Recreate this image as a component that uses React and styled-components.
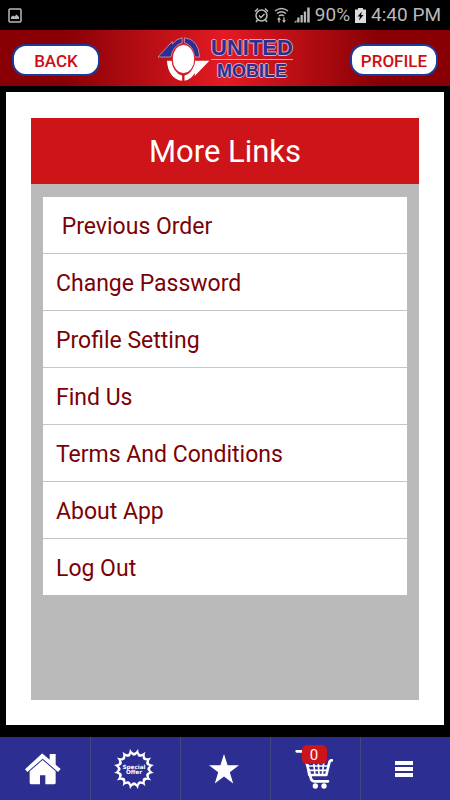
import React from "react";
import styled, { createGlobalStyle } from "styled-components";

const GlobalStyle = createGlobalStyle`
  * {
    box-sizing: border-box;
  }
  body {
    margin: 0;
    background: #000;
    font-family: Roboto, "Liberation Sans", sans-serif;
  }
`;
const Page = styled.div`
  min-height: 100vh;
  display: flex;
  flex-direction: column;
  background: #000;
`;
const StatusBar = styled.div`
  height: 30px;
  padding: 0 9px 0 8px;
  display: flex;
  align-items: center;
  justify-content: space-between;
  color: #b9b9b9;
`;
const StatusRight = styled.div`
  display: flex;
  align-items: center;
  gap: 5px;
  font-size: 19px;
  line-height: 30px;
`;
const StatusIcon = styled.svg`
  display: block;
  fill: none;
  stroke: #b9b9b9;
`;
const Header = styled.header`
  height: 56px;
  padding: 4px 12px 0;
  display: flex;
  align-items: center;
  justify-content: space-between;
  background: linear-gradient(
    to right,
    #880004 0%,
    #880004 14%,
    #e31b23 50%,
    #880004 84%,
    #880004 100%
  );
`;
const HeaderButton = styled.button`
  width: 88px;
  height: 32px;
  padding: 2px 0 0;
  border: 2px solid #1c3a9c;
  border-radius: 14px;
  background: #fff;
  color: #cf0d14;
  font-family: inherit;
  font-size: 17px;
  font-weight: 500;
  line-height: 26px;
  cursor: pointer;
`;
const Logo = styled.div`
  display: flex;
  align-items: center;
  gap: 1px;
  padding-bottom: 2px;
`;
const LogoText = styled.div`
  display: flex;
  flex-direction: column;
  align-items: center;
`;
const LogoWord = styled.span`
  width: 100%;
  text-align: center;
  font-family: "Liberation Sans", sans-serif;
  font-weight: 700;
  font-size: ${(props) => props.$size}px;
  line-height: 22px;
  color: #2b2e92;
  text-shadow: 1px 0 #dfa9b4, -1px 0 #dfa9b4, 0 1px #dfa9b4, 0 -1px #dfa9b4;
`;
const LogoRule = styled.span`
  width: 100%;
  height: 1px;
  background: #f0a3a8;
`;
const Main = styled.main`
  flex: 1;
  margin: 6px 6px 12px;
  padding: 26px 25px 25px;
  display: flex;
  flex-direction: column;
  background: #fff;
`;
const Panel = styled.section`
  flex: 1;
  background: #bababa;
`;
const PanelTitle = styled.h1`
  margin: 0;
  padding: 2px 0 0;
  background: #cd1419;
  color: #fff;
  font-size: 31px;
  font-weight: 400;
  line-height: 64px;
  text-align: center;
`;
const LinkList = styled.ul`
  margin: 13px 12px;
  padding: 0;
  list-style: none;
  background: #fff;
`;
const LinkItem = styled.li`
  & + & {
    border-top: 1px solid #c6c6c6;
  }
`;
const LinkRow = styled.a`
  display: block;
  padding: 4px 13px 0;
  color: #7a0206;
  font-size: 23px;
  line-height: 52px;
  text-decoration: none;
  white-space: pre;
`;
const NavBar = styled.nav`
  height: 63px;
  display: grid;
  grid-template-columns: repeat(5, 1fr);
  background: #2c2e91;
`;
const NavLink = styled.a`
  display: flex;
  align-items: center;
  justify-content: center;
  padding-right: 4px;
  color: #fff;
  text-decoration: none;
  & + & {
    border-left: 1px solid #44467f;
  }
`;
const NavIcon = styled.svg`
  display: block;
  fill: #fff;
`;
const CartHolder = styled.span`
  position: relative;
`;
const CartBadge = styled.span`
  position: absolute;
  top: -4px;
  left: 7px;
  width: 25px;
  height: 19px;
  border-radius: 5px;
  background: #cd1419;
  font-size: 15px;
  line-height: 20px;
  text-align: center;
`;

const links = [
  " Previous Order",
  "Change Password",
  "Profile Setting",
  "Find Us",
  "Terms And Conditions",
  "About App",
  "Log Out",
];

// burst outline: sharp tips joined by curves that dip towards the centre
const burstPath = (tip, dip) => {
  const count = 16;
  const point = (radius, step) => {
    const angle = (step * Math.PI * 2) / count - Math.PI / 2 + Math.PI / count;
    return `${(radius * Math.cos(angle)).toFixed(1)} ${(
      radius * Math.sin(angle)
    ).toFixed(1)}`;
  };
  let d = `M${point(tip, 0)}`;
  for (let i = 0; i < count; i++) {
    d += `Q${point(dip, i + 0.5)} ${point(tip, i + 1)}`;
  }
  return d + "Z";
};

const PictureIcon = () => (
  <StatusIcon width="14" height="15" viewBox="0 0 14 15">
    <rect x="1" y="1" width="12" height="13" rx="1" strokeWidth="1.5" />
    <path d="M3 11V9l2-1.500 1.500 1L8.500 6.500 11 9v2z" fill="#b9b9b9" stroke="none" />
  </StatusIcon>
);

const AlarmIcon = () => (
  <StatusIcon width="15" height="16" viewBox="0 0 15 16" strokeWidth="1.5">
    <circle cx="7.5" cy="8.500" r="5.500" />
    <path d="M1 4.500L4 1.500M14 4.500L11 1.500M3.500 13L2 15M11.500 13L13 15M5 8.500l2 2 3.500-3.500" />
  </StatusIcon>
);

const WifiIcon = () => (
  <StatusIcon width="15" height="16" viewBox="0 0 15 16" strokeWidth="1.5">
    <path d="M1 4Q7.500-1 14 4M3 6.500Q7.500 3 12 6.500M5 9Q7.500 7 10 9" />
    <path
      d="M5 10L7 12.700H5.700V15.500H4.300V12.700H3zM10 16L8 13.300H9.300V10.500H10.700V13.300H12z"
      fill="#b9b9b9"
      stroke="none"
    />
  </StatusIcon>
);

const SignalIcon = () => (
  <StatusIcon width="16" height="16" viewBox="0 0 16 16">
    <path
      d="M0 15.500h2.500v-2.500zM3.200 15.500h2.300V10.500h-2.300zM6.500 15.500h2.300V8h-2.300zM9.800 15.500h2.300V4.500h-2.300zM13.200 15.500h2.500V0.500h-2.500z"
      fill="#b9b9b9"
      stroke="none"
    />
  </StatusIcon>
);

const BatteryIcon = () => (
  <StatusIcon width="11" height="15" viewBox="0 0 11 15">
    <path d="M0 1.500h3V0h5v1.500h3V15H0z" fill="#dcdcdc" stroke="none" />
    <path d="M7 3.500L2.500 8.500H5L4 12.500l4.500-5.500H6z" fill="#000" stroke="none" />
  </StatusIcon>
);

const LogoIcon = () => (
  <svg width="53" height="46" viewBox="20 18 160 138">
    <g stroke="#e7b4bd" strokeWidth="2" fill="#2b2e92">
      <path d="M23 81L66 34V42Q80 25 96 23V38Q68 46 62 81Z" />
      <path d="M103 23Q145 27 149 81H134Q130 46 103 38Z" />
    </g>
    <g fill="#fff">
      <path d="M50 92H64Q68 128 96 137V153Q54 146 50 92Z" />
      <path d="M103 153V137Q129 130 135 92H178L134 138V129Q122 150 103 153Z" />
      <ellipse cx="100" cy="87" rx="34" ry="44" stroke="#d81920" strokeWidth="3" />
    </g>
  </svg>
);

const HomeIcon = () => (
  <NavIcon width="36" height="32" viewBox="77 66 108 96">
    <path d="M130 68L151 86V69H169V101L184 114L176 123L130 83L84 123L77 115L124 71Q130 66 130 68Z" />
    <path d="M130 87L169 121V155Q169 160 164 160H138V133H122V160H96Q91 160 91 155V121Z" />
  </NavIcon>
);

const OfferIcon = () => (
  <NavIcon width="40" height="42" viewBox="-60 -63 120 126">
    <path d={burstPath(62, 36)} />
    <path d={burstPath(47, 34)} fill="#2c2e91" />
    <g
      fontFamily="DejaVu Sans, sans-serif"
      fontSize="17"
      fontWeight="700"
      textAnchor="middle"
    >
      <text x="0" y="-1">Special</text>
      <text x="0" y="16">Offer</text>
    </g>
  </NavIcon>
);

const StarIcon = () => (
  <NavIcon width="30" height="30" viewBox="0 0 30 30">
    <path d="M15 0L18.600 11.200H30L20.800 18.200L24.200 29.500L15 22.600L5.800 29.500L9.200 18.200L0 11.200H11.400Z" />
  </NavIcon>
);

const CartIcon = () => (
  <NavIcon width="38" height="40" viewBox="206 56 114 120">
    <g fill="none" stroke="#fff" strokeLinecap="round" strokeLinejoin="round">
      <path
        d="M211 63H231L254 145Q256 152 263 153H305M242 97L249 134H300L309 96Q311 89 317 90"
        strokeWidth="8"
      />
      <path
        d="M246 107H306M248 120H303M262 97L266 134M276 97L278 134M292 97L288 134"
        strokeWidth="5"
      />
    </g>
    <circle cx="267" cy="167" r="8" />
    <circle cx="293" cy="167" r="8" />
  </NavIcon>
);

const MenuIcon = () => (
  <NavIcon width="18" height="16" viewBox="0 0 18 16">
    <path d="M0 0H18V4H0ZM0 6H18V10H0ZM0 12H18V16H0Z" />
  </NavIcon>
);

const App = () => {
  return (
    <Page>
      <GlobalStyle />
      <StatusBar>
        <PictureIcon />
        <StatusRight>
          <AlarmIcon />
          <WifiIcon />
          <SignalIcon />
          <span>90%</span>
          <BatteryIcon />
          <span>4:40 PM</span>
        </StatusRight>
      </StatusBar>
      <Header>
        <HeaderButton type="button">BACK</HeaderButton>
        <Logo>
          <LogoIcon />
          <LogoText>
            <LogoWord $size={22}>UNITED</LogoWord>
            <LogoRule />
            <LogoWord $size={18}>MOBILE</LogoWord>
          </LogoText>
        </Logo>
        <HeaderButton type="button">PROFILE</HeaderButton>
      </Header>
      <Main>
        <Panel>
          <PanelTitle>More Links</PanelTitle>
          <LinkList>
            {links.map((link) => (
              <LinkItem key={link}>
                <LinkRow href="#">{link}</LinkRow>
              </LinkItem>
            ))}
          </LinkList>
        </Panel>
      </Main>
      <NavBar>
        <NavLink href="#" aria-label="Home">
          <HomeIcon />
        </NavLink>
        <NavLink href="#">
          <OfferIcon />
        </NavLink>
        <NavLink href="#" aria-label="Favourites">
          <StarIcon />
        </NavLink>
        <NavLink href="#" aria-label="Cart">
          <CartHolder>
            <CartIcon />
            <CartBadge>0</CartBadge>
          </CartHolder>
        </NavLink>
        <NavLink href="#" aria-label="More">
          <MenuIcon />
        </NavLink>
      </NavBar>
    </Page>
  );
};

export default App;
